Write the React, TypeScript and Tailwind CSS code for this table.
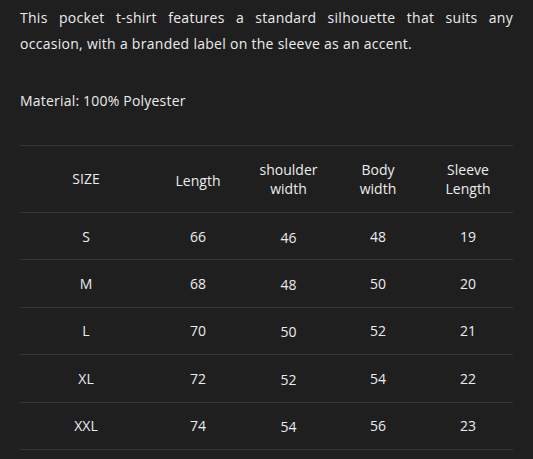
import React from "react";

const rows = [
  ["S", "66", "46", "48", "19"],
  ["M", "68", "48", "50", "20"],
  ["L", "70", "50", "52", "21"],
  ["XL", "72", "52", "54", "22"],
  ["XXL", "74", "54", "56", "23"],
];

export default function App() {
  return (
    <div className="min-h-[459px] bg-[#1f1f1f] px-5 pt-[5px] text-[#ececec] font-['Open_Sans',sans-serif] text-[14px]">
      {/* description */}
      <p className="text-justify leading-[26px] tracking-[0.28px]">
        This pocket t-shirt features a standard silhouette that suits any occasion, with a branded label on the sleeve as an accent.
      </p>
      <p className="mt-[31px] leading-[26px] tracking-[0.2px]">Material: 100% Polyester</p>

      {/* size table */}
      <div className="mt-[31px] border-t border-[#353535]">
        <div className="grid grid-cols-[132px_92px_89px_90px_90px] h-[67px] items-center text-center leading-[19px] border-b border-[#353535]">
          <div className="-mt-[1px]">SIZE</div>
          <div className="mt-[2px]">Length</div>
          <div>shoulder<br />width</div>
          <div>Body<br />width</div>
          <div>Sleeve<br />Length</div>
        </div>
        {rows.map((r) => (
          <div
            key={r[0]}
            className="grid grid-cols-[132px_92px_89px_90px_90px] h-[47.4px] items-center text-center border-b border-[#353535]"
          >
            <div>{r[0]}</div>
            <div>{r[1]}</div>
            <div className="pt-[2px]">{r[2]}</div>
            <div>{r[3]}</div>
            <div>{r[4]}</div>
          </div>
        ))}
      </div>
    </div>
  );
}
